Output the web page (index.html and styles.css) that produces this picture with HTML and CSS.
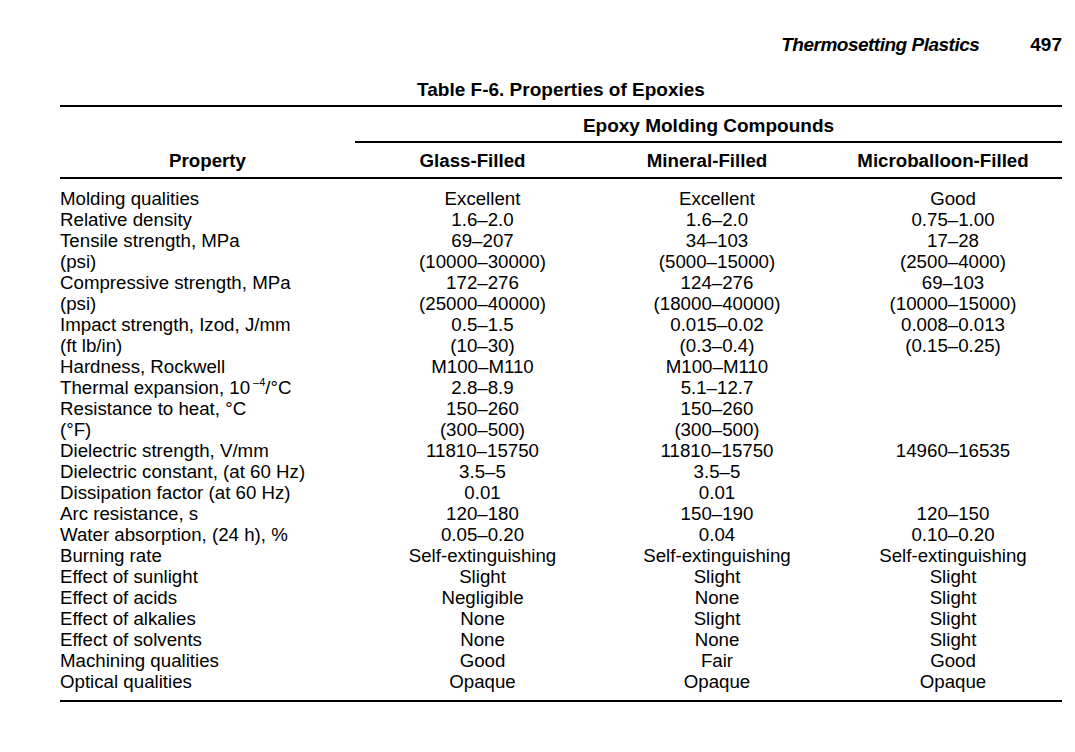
FILE: index.html
```html
<!DOCTYPE html>
<html lang="en">
<head>
<meta charset="utf-8">
<title>Table F-6. Properties of Epoxies</title>
<link rel="stylesheet" href="styles.css">
</head>
<body>
<div class="page">
  <header class="running-head">
    <span class="rh-title">Thermosetting Plastics</span>
    <span class="rh-num">497</span>
  </header>
  <h1 class="caption">Table F-6. Properties of Epoxies</h1>
  <div class="table">
    <div class="thead">
      <div class="prop-head">Property</div>
      <div class="group-head">Epoxy Molding Compounds</div>
      <div class="col-head">Glass-Filled</div>
      <div class="col-head">Mineral-Filled</div>
      <div class="col-head">Microballoon-Filled</div>
    </div>
    <div class="tbody">
      <div class="row"><span class="lbl">Molding qualities</span><span class="val">Excellent</span><span class="val">Excellent</span><span class="val">Good</span></div>
      <div class="row"><span class="lbl">Relative density</span><span class="val">1.6–2.0</span><span class="val">1.6–2.0</span><span class="val">0.75–1.00</span></div>
      <div class="row"><span class="lbl">Tensile strength, MPa</span><span class="val">69–207</span><span class="val">34–103</span><span class="val">17–28</span></div>
      <div class="row"><span class="lbl">(psi)</span><span class="val">(10000–30000)</span><span class="val">(5000–15000)</span><span class="val">(2500–4000)</span></div>
      <div class="row"><span class="lbl">Compressive strength, MPa</span><span class="val">172–276</span><span class="val">124–276</span><span class="val">69–103</span></div>
      <div class="row"><span class="lbl">(psi)</span><span class="val">(25000–40000)</span><span class="val">(18000–40000)</span><span class="val">(10000–15000)</span></div>
      <div class="row"><span class="lbl">Impact strength, Izod, J/mm</span><span class="val">0.5–1.5</span><span class="val">0.015–0.02</span><span class="val">0.008–0.013</span></div>
      <div class="row"><span class="lbl">(ft lb/in)</span><span class="val">(10–30)</span><span class="val">(0.3–0.4)</span><span class="val">(0.15–0.25)</span></div>
      <div class="row"><span class="lbl">Hardness, Rockwell</span><span class="val">M100–M110</span><span class="val">M100–M110</span><span class="val"></span></div>
      <div class="row"><span class="lbl">Thermal expansion, 10<sup class="exp">–4</sup>/°C</span><span class="val">2.8–8.9</span><span class="val">5.1–12.7</span><span class="val"></span></div>
      <div class="row"><span class="lbl">Resistance to heat, °C</span><span class="val">150–260</span><span class="val">150–260</span><span class="val"></span></div>
      <div class="row"><span class="lbl">(°F)</span><span class="val">(300–500)</span><span class="val">(300–500)</span><span class="val"></span></div>
      <div class="row"><span class="lbl">Dielectric strength, V/mm</span><span class="val">11810–15750</span><span class="val">11810–15750</span><span class="val">14960–16535</span></div>
      <div class="row"><span class="lbl">Dielectric constant, (at 60 Hz)</span><span class="val">3.5–5</span><span class="val">3.5–5</span><span class="val"></span></div>
      <div class="row"><span class="lbl">Dissipation factor (at 60 Hz)</span><span class="val">0.01</span><span class="val">0.01</span><span class="val"></span></div>
      <div class="row"><span class="lbl">Arc resistance, s</span><span class="val">120–180</span><span class="val">150–190</span><span class="val">120–150</span></div>
      <div class="row"><span class="lbl">Water absorption, (24 h), %</span><span class="val">0.05–0.20</span><span class="val">0.04</span><span class="val">0.10–0.20</span></div>
      <div class="row"><span class="lbl">Burning rate</span><span class="val">Self-extinguishing</span><span class="val">Self-extinguishing</span><span class="val">Self-extinguishing</span></div>
      <div class="row"><span class="lbl">Effect of sunlight</span><span class="val">Slight</span><span class="val">Slight</span><span class="val">Slight</span></div>
      <div class="row"><span class="lbl">Effect of acids</span><span class="val">Negligible</span><span class="val">None</span><span class="val">Slight</span></div>
      <div class="row"><span class="lbl">Effect of alkalies</span><span class="val">None</span><span class="val">Slight</span><span class="val">Slight</span></div>
      <div class="row"><span class="lbl">Effect of solvents</span><span class="val">None</span><span class="val">None</span><span class="val">Slight</span></div>
      <div class="row"><span class="lbl">Machining qualities</span><span class="val">Good</span><span class="val">Fair</span><span class="val">Good</span></div>
      <div class="row"><span class="lbl">Optical qualities</span><span class="val">Opaque</span><span class="val">Opaque</span><span class="val">Opaque</span></div>
    </div>
  </div>
</div>
</body>
</html>
```

FILE: styles.css
```css
* { box-sizing: border-box; }

html, body {
  margin: 0;
  padding: 0;
  background: #fff;
  color: #000;
}

body {
  font-family: "Liberation Sans", Arial, sans-serif;
  font-size: 18.7px;
}

.page {
  width: 1075px;
  padding: 33px 13px 0 60px;
}

.running-head {
  display: flex;
  justify-content: flex-end;
  align-items: baseline;
  gap: 51px;
  font-family: "Liberation Sans", Arial, sans-serif;
  font-weight: bold;
  font-size: 19px;
  line-height: 24px;
}

.rh-title {
  font-style: italic;
  letter-spacing: -0.5px;
}

.rh-num {
  font-style: normal;
}

.caption {
  margin: 22px 0 4px;
  font-size: 19px;
  font-weight: bold;
  line-height: 22px;
  text-align: center;
}

.table {
  border-top: 2px solid #000;
  border-bottom: 2px solid #000;
  --cols: 295px 235px 234px 238px;
}

.thead {
  display: grid;
  grid-template-columns: var(--cols);
  border-bottom: 2px solid #000;
  font-weight: bold;
  line-height: 22px;
}

.prop-head {
  grid-row: 1 / 3;
  grid-column: 1;
  align-self: end;
  text-align: center;
  padding: 0 0 5px;
}

.group-head {
  grid-column: 2 / 5;
  grid-row: 1;
  text-align: center;
  padding: 8px 0 4px;
  border-bottom: 2px solid #000;
  font-size: 19px;
}

.col-head {
  grid-row: 2;
  text-align: center;
  padding: 7px 0 5px;
}

.tbody {
  padding: 9px 0 8px;
}

.row {
  display: grid;
  grid-template-columns: var(--cols);
  line-height: 21px;
  height: 21px;
}

.lbl {
  white-space: nowrap;
}

.val {
  text-align: center;
  padding-left: 20px;
  white-space: nowrap;
}

.exp {
  font-size: 11px;
  line-height: 0;
  vertical-align: 8px;
  margin-left: 3px;
}
```
